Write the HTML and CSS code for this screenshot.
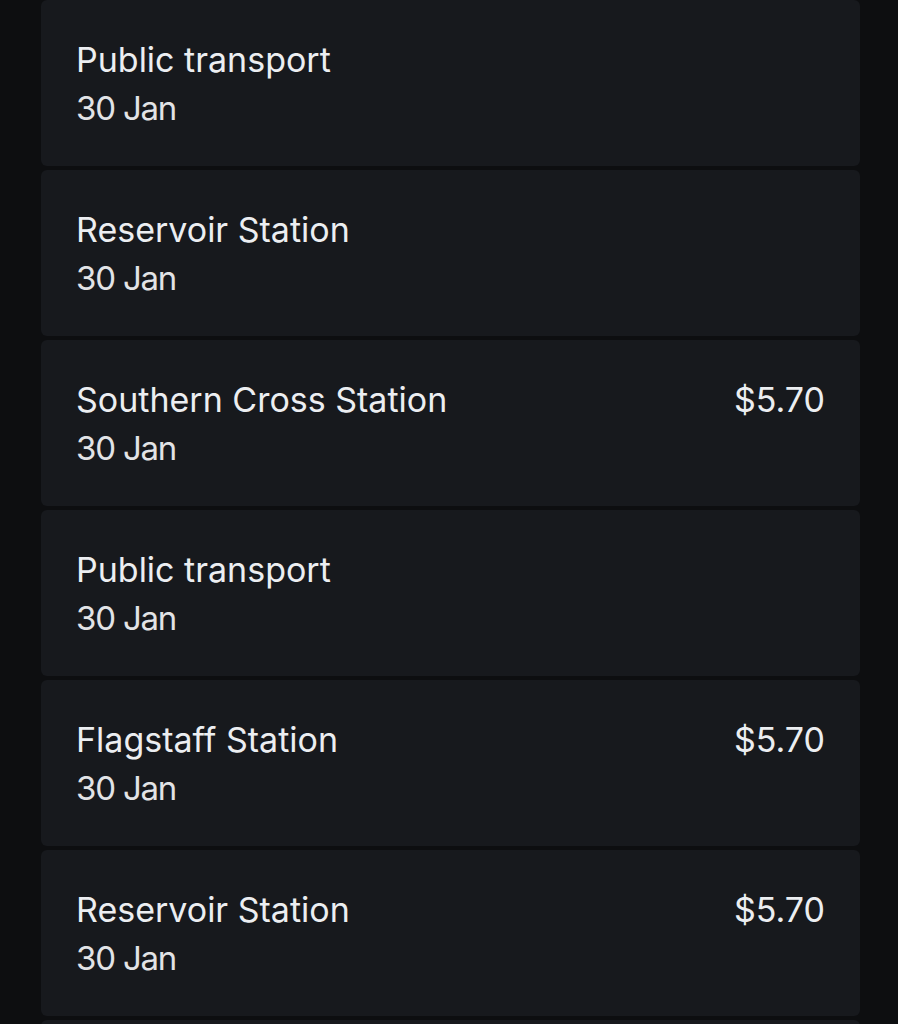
FILE: index.html
```html
<!DOCTYPE html>
<html lang="en">
<head>
    <meta charset="UTF-8">
    <meta name="viewport" content="width=device-width, initial-scale=1.0">
    <title>Transactions</title>
    <link rel="stylesheet" href="styles.css">
</head>
<body>
    <div class="list">
        <div class="item">
            <div class="info">
                <div class="title">Public transport</div>
                <div class="date">30 Jan</div>
            </div>
        </div>
        <div class="item">
            <div class="info">
                <div class="title">Reservoir Station</div>
                <div class="date">30 Jan</div>
            </div>
        </div>
        <div class="item">
            <div class="info">
                <div class="title">Southern Cross Station</div>
                <div class="date">30 Jan</div>
            </div>
            <div class="amount">$5.70</div>
        </div>
        <div class="item">
            <div class="info">
                <div class="title">Public transport</div>
                <div class="date">30 Jan</div>
            </div>
        </div>
        <div class="item">
            <div class="info">
                <div class="title">Flagstaff Station</div>
                <div class="date">30 Jan</div>
            </div>
            <div class="amount">$5.70</div>
        </div>
        <div class="item">
            <div class="info">
                <div class="title">Reservoir Station</div>
                <div class="date">30 Jan</div>
            </div>
            <div class="amount">$5.70</div>
        </div>
        <div class="item"></div>
    </div>
</body>
</html>
```

FILE: styles.css
```css
body {
    margin: 0;
    font-family: Inter, Roboto, sans-serif;
    background-color: #0d0e10;
    color: #eceef1;
    height: 1024px;
    overflow: hidden;
}

.list {
    display: flex;
    flex-direction: column;
    gap: 4px;
    width: 819px;
    margin-left: 41px;
}

.item {
    display: flex;
    justify-content: space-between;
    align-items: flex-start;
    box-sizing: border-box;
    height: 166px;
    padding: 35px 35px 0 35px;
    background-color: #17191d;
    border-radius: 6px;
}

.title {
    font-size: 34px;
    line-height: 49px;
}

.date {
    font-size: 33px;
    line-height: 49px;
    letter-spacing: -1.2px;
    color: #e2e3e6;
}

.amount {
    font-size: 34px;
    line-height: 49px;
}
```
